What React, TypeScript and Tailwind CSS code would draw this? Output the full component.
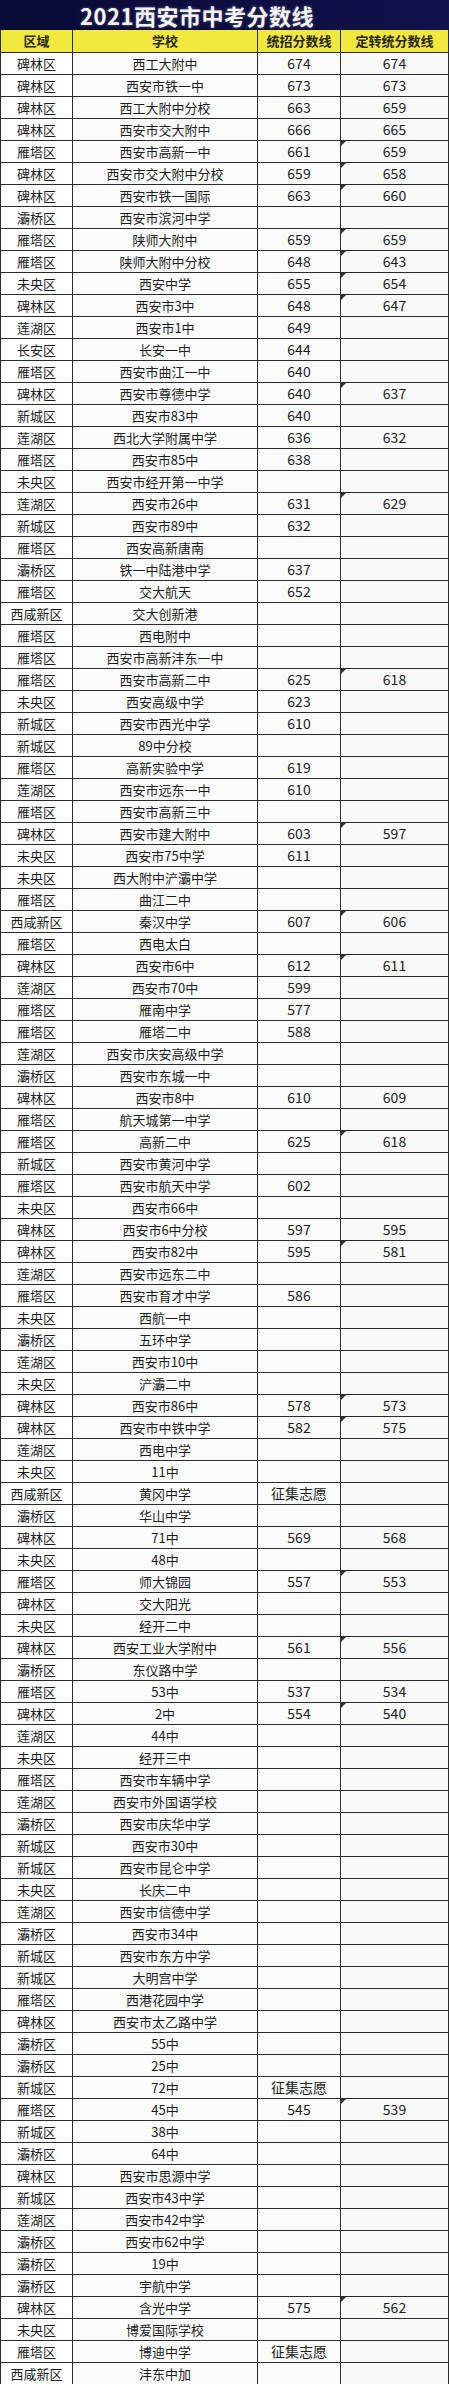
type Row = [string, string, string?, string?];

const rows: Row[] = [
  ['碑林区', '西工大附中', '674', '674'],
  ['碑林区', '西安市铁一中', '673', '673'],
  ['碑林区', '西工大附中分校', '663', '659'],
  ['碑林区', '西安市交大附中', '666', '665'],
  ['雁塔区', '西安市高新一中', '661', '659'],
  ['碑林区', '西安市交大附中分校', '659', '658'],
  ['碑林区', '西安市铁一国际', '663', '660'],
  ['灞桥区', '西安市滨河中学'],
  ['雁塔区', '陕师大附中', '659', '659'],
  ['雁塔区', '陕师大附中分校', '648', '643'],
  ['未央区', '西安中学', '655', '654'],
  ['碑林区', '西安市3中', '648', '647'],
  ['莲湖区', '西安市1中', '649'],
  ['长安区', '长安一中', '644'],
  ['雁塔区', '西安市曲江一中', '640'],
  ['碑林区', '西安市尊德中学', '640', '637'],
  ['新城区', '西安市83中', '640'],
  ['莲湖区', '西北大学附属中学', '636', '632'],
  ['雁塔区', '西安市85中', '638'],
  ['未央区', '西安市经开第一中学'],
  ['莲湖区', '西安市26中', '631', '629'],
  ['新城区', '西安市89中', '632'],
  ['雁塔区', '西安高新唐南'],
  ['灞桥区', '铁一中陆港中学', '637'],
  ['雁塔区', '交大航天', '652'],
  ['西咸新区', '交大创新港'],
  ['雁塔区', '西电附中'],
  ['雁塔区', '西安市高新沣东一中'],
  ['雁塔区', '西安市高新二中', '625', '618'],
  ['未央区', '西安高级中学', '623'],
  ['新城区', '西安市西光中学', '610'],
  ['新城区', '89中分校'],
  ['雁塔区', '高新实验中学', '619'],
  ['莲湖区', '西安市远东一中', '610'],
  ['雁塔区', '西安市高新三中'],
  ['碑林区', '西安市建大附中', '603', '597'],
  ['未央区', '西安市75中学', '611'],
  ['未央区', '西大附中浐灞中学'],
  ['雁塔区', '曲江二中'],
  ['西咸新区', '秦汉中学', '607', '606'],
  ['雁塔区', '西电太白'],
  ['碑林区', '西安市6中', '612', '611'],
  ['莲湖区', '西安市70中', '599'],
  ['雁塔区', '雁南中学', '577'],
  ['雁塔区', '雁塔二中', '588'],
  ['莲湖区', '西安市庆安高级中学'],
  ['灞桥区', '西安市东城一中'],
  ['碑林区', '西安市8中', '610', '609'],
  ['雁塔区', '航天城第一中学'],
  ['雁塔区', '高新二中', '625', '618'],
  ['新城区', '西安市黄河中学'],
  ['雁塔区', '西安市航天中学', '602'],
  ['未央区', '西安市66中'],
  ['碑林区', '西安市6中分校', '597', '595'],
  ['碑林区', '西安市82中', '595', '581'],
  ['莲湖区', '西安市远东二中'],
  ['雁塔区', '西安市育才中学', '586'],
  ['未央区', '西航一中'],
  ['灞桥区', '五环中学'],
  ['莲湖区', '西安市10中'],
  ['未央区', '浐灞二中'],
  ['碑林区', '西安市86中', '578', '573'],
  ['碑林区', '西安市中铁中学', '582', '575'],
  ['莲湖区', '西电中学'],
  ['未央区', '11中'],
  ['西咸新区', '黄冈中学', '征集志愿'],
  ['灞桥区', '华山中学'],
  ['碑林区', '71中', '569', '568'],
  ['未央区', '48中'],
  ['雁塔区', '师大锦园', '557', '553'],
  ['碑林区', '交大阳光'],
  ['未央区', '经开二中'],
  ['碑林区', '西安工业大学附中', '561', '556'],
  ['灞桥区', '东仪路中学'],
  ['雁塔区', '53中', '537', '534'],
  ['碑林区', '2中', '554', '540'],
  ['莲湖区', '44中'],
  ['未央区', '经开三中'],
  ['雁塔区', '西安市车辆中学'],
  ['莲湖区', '西安市外国语学校'],
  ['灞桥区', '西安市庆华中学'],
  ['新城区', '西安市30中'],
  ['新城区', '西安市昆仑中学'],
  ['未央区', '长庆二中'],
  ['莲湖区', '西安市信德中学'],
  ['灞桥区', '西安市34中'],
  ['新城区', '西安市东方中学'],
  ['新城区', '大明宫中学'],
  ['雁塔区', '西港花园中学'],
  ['碑林区', '西安市太乙路中学'],
  ['灞桥区', '55中'],
  ['灞桥区', '25中'],
  ['新城区', '72中', '征集志愿'],
  ['雁塔区', '45中', '545', '539'],
  ['新城区', '38中'],
  ['灞桥区', '64中'],
  ['碑林区', '西安市思源中学'],
  ['新城区', '西安市43中学'],
  ['莲湖区', '西安市42中学'],
  ['灞桥区', '西安市62中学'],
  ['灞桥区', '19中'],
  ['灞桥区', '宇航中学'],
  ['碑林区', '含光中学', '575', '562'],
  ['未央区', '博爱国际学校'],
  ['雁塔区', '博迪中学', '征集志愿'],
  ['西咸新区', '沣东中加'],
];

// rows (1-based) whose last cell carries the little comment mark
const marked = new Set([5, 6, 7, 9, 10, 11, 12, 16, 21, 29, 36, 40, 42, 50, 55, 62, 63, 70, 73, 76, 94, 103]);

const cell = 'flex items-center justify-center whitespace-nowrap';

export default function App() {
  return (
    <div
      className="w-[449px] bg-white text-[#1c1c1c]"
      style={{ fontFamily: '"Noto Sans CJK SC", "Noto Sans", sans-serif' }}
    >
      <div className="h-[30px] bg-gradient-to-r from-[#0a0a36] via-[#0d0d42] to-[#12124c] flex items-center pl-[80px]">
        <h1 className="text-[22px] leading-none font-bold text-[#f4f4f4] tracking-[0.5px] [text-shadow:0_0_3px_rgba(255,255,255,0.35)]">
          2021西安市中考分数线
        </h1>
      </div>

      <div className="grid grid-cols-[71px_184px_82px_107px] auto-rows-[21px] [grid-template-rows:22px] gap-px bg-[#2a2a2a] px-px">
        {['区域', '学校', '统招分数线', '定转统分数线'].map((h) => (
          <div key={h} className={`${cell} bg-[#f2e93e] text-[13px] font-bold text-[#2a2a1a]`}>
            {h}
          </div>
        ))}

        {rows.map(([area, school, a, b], i) => (
          <div key={i} className="contents">
            <div className={`${cell} bg-white text-[13px]`}>{area}</div>
            <div className={`${cell} bg-[#fbfbfb] text-[13px]`}>{school}</div>
            <div className={`${cell} bg-[#f9fafa] text-[14px]`}>{a}</div>
            <div className={`${cell} relative bg-[#f9f9f9] text-[14px]`}>
              {marked.has(i + 1) && (
                <span className="absolute left-0 top-0 w-0 h-0 border-t-[5px] border-r-[5px] border-t-[#333] border-r-transparent" />
              )}
              {b}
            </div>
          </div>
        ))}
      </div>
    </div>
  );
}
